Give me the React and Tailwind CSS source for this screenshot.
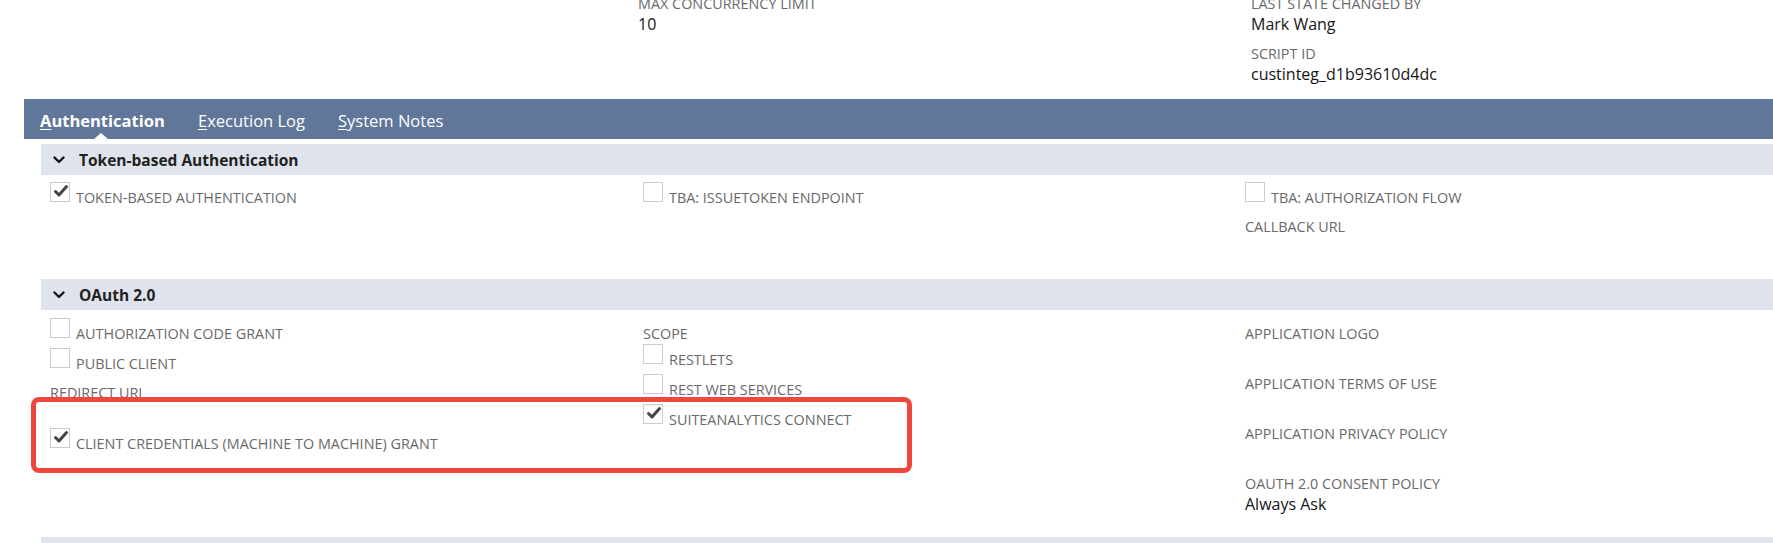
import React from "react";

const Check = () => (
  <svg width="16" height="14" viewBox="0 0 16 14" className="absolute left-[2px] top-[1px]">
    <path d="M2.5 7.5 L6 11 L13.5 2.5" fill="none" stroke="#444444" strokeWidth="3" strokeLinecap="round" strokeLinejoin="round" />
  </svg>
);

const Box = ({ checked }) => (
  <div className="relative w-[20px] h-[20px] shrink-0 border border-[#cccccc] bg-white">
    {checked && <Check />}
  </div>
);

const CheckRow = ({ checked, children }) => (
  <div className="flex items-start h-[30px]">
    <Box checked={checked} />
    <div className="ml-[6px] mt-[6.5px] text-[14.4px] leading-[18px] text-[#696969] uppercase whitespace-nowrap">{children}</div>
  </div>
);

const Label = ({ children, className = "" }) => (
  <div className={"text-[14.4px] leading-[18px] text-[#696969] uppercase whitespace-nowrap " + className}>{children}</div>
);

const Value = ({ children }) => (
  <div className="text-[16px] leading-[22px] h-[22px] text-[#161616] whitespace-nowrap">{children}</div>
);

const Field = ({ label, value, className = "" }) => (
  <div className={"h-[50px] " + className}>
    <Label>{label}</Label>
    <Value>{value}</Value>
  </div>
);

const Chevron = () => (
  <svg width="12" height="8" viewBox="0 0 12 8">
    <polyline points="1.5,1.5 6,6 10.5,1.5" fill="none" stroke="#111" strokeWidth="2.4" strokeLinecap="round" strokeLinejoin="round" />
  </svg>
);

const SectionHeader = ({ title }) => (
  <div className="ml-[41px] h-[31px] bg-[#dfe3eb] flex items-center pl-[12px]">
    <Chevron />
    <div className="ml-[14px] text-[15.5px] leading-[22px] font-bold text-[#222222]">{title}</div>
  </div>
);

export default function App() {
  return (
    <div className="relative w-[1773px] h-[543px] overflow-hidden bg-white font-['Open_Sans',sans-serif]">
      {/* top record fields */}
      <div className="flex h-[99px] overflow-hidden">
        <div className="w-[638px] shrink-0" />
        <div className="w-[613px] shrink-0 -mt-[5.5px]">
          <Field label="Max Concurrency Limit" value="10" />
        </div>
        <div className="-mt-[5.5px]">
          <Field label="Last State Changed By" value="Mark Wang" />
          <Field label="Script ID" value="custinteg_d1b93610d4dc" />
        </div>
      </div>

      {/* tab bar */}
      <div className="ml-[24px] h-[40px] bg-[#607799] flex items-start pl-[16px] pt-[11px] text-white text-[16.5px] leading-[22px]">
        <div className="relative w-[158px] h-[29px] font-bold">
          <span className="underline underline-offset-[2px]">A</span>uthentication
          <div className="absolute left-[54px] bottom-0 w-0 h-0 border-x-[7px] border-x-transparent border-b-[6px] border-b-white" />
        </div>
        <div className="w-[140px]">
          <span className="underline underline-offset-[2px]">E</span>xecution Log
        </div>
        <div>
          <span className="underline underline-offset-[2px]">S</span>ystem Notes
        </div>
      </div>

      <div className="h-[5px]" />

      {/* Token-based Authentication */}
      <SectionHeader title="Token-based Authentication" />
      <div className="h-[104px] pl-[50px] pt-[7px] grid grid-cols-[593px_602px_1fr]">
        <div>
          <CheckRow checked>Token-based Authentication</CheckRow>
        </div>
        <div>
          <CheckRow>TBA: IssueToken Endpoint</CheckRow>
        </div>
        <div>
          <CheckRow>TBA: Authorization Flow</CheckRow>
          <Label className="mt-[5.5px]">Callback URL</Label>
        </div>
      </div>

      {/* OAuth 2.0 */}
      <SectionHeader title="OAuth 2.0" />
      <div className="h-[227px] pl-[50px] pt-[8px] grid grid-cols-[593px_602px_1fr]">
        <div>
          <CheckRow>Authorization Code Grant</CheckRow>
          <CheckRow>Public Client</CheckRow>
          <div className="mt-[5.5px]">
            <Label>Redirect URI</Label>
            <Value />
          </div>
          <div className="mt-[4.5px]">
            <CheckRow checked>Client Credentials (Machine to Machine) Grant</CheckRow>
          </div>
        </div>
        <div>
          <Label className="mt-[6.5px]">Scope</Label>
          <div className="mt-[1.5px]">
            <CheckRow>RESTlets</CheckRow>
            <CheckRow>REST Web Services</CheckRow>
            <CheckRow checked>SuiteAnalytics Connect</CheckRow>
          </div>
        </div>
        <div className="pt-[6.5px]">
          <Field label="Application Logo" />
          <Field label="Application Terms of Use" />
          <Field label="Application Privacy Policy" />
          <Field label="OAuth 2.0 Consent Policy" value="Always Ask" />
        </div>
      </div>
      <div className="ml-[41px] h-[6px] bg-[#dfe3eb]" />

      {/* annotation */}
      <div className="absolute left-[31px] top-[397px] w-[881px] h-[76px] border-[5px] border-[#f0473c] rounded-[8px]" />
    </div>
  );
}
